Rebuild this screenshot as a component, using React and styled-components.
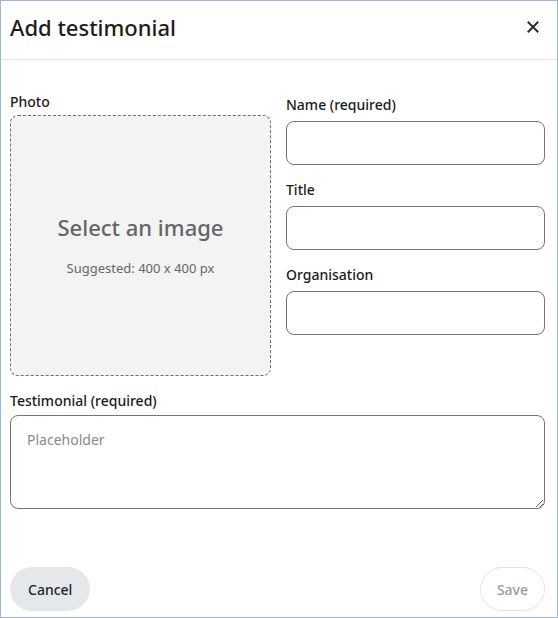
import React from 'react';
import styled, { createGlobalStyle } from 'styled-components';

const GlobalStyle = createGlobalStyle`
  html, body {
    margin: 0;
    padding: 0;
    background: #ffffff;
  }
  * {
    box-sizing: border-box;
  }
  body {
    font-family: "Noto Sans", "Open Sans", sans-serif;
    color: #1f1f1f;
  }
`

const App = () => {
  return (
    <>
      <GlobalStyle />
      <Dialog>
        <Header>
          <Title>Add testimonial</Title>
          <CloseButton aria-label="Close">
            <svg width="12" height="12" viewBox="0 0 12 12">
              <path d="M1.5 1.5 L10.5 10.5 M10.5 1.5 L1.5 10.5" stroke="#2b2b2b" strokeWidth="2" strokeLinecap="square" />
            </svg>
          </CloseButton>
        </Header>
        <Body>
          <Columns>
            <Field>
              <Label>Photo</Label>
              <PhotoDrop>
                <PhotoTitle>Select an image</PhotoTitle>
                <PhotoHint>Suggested: 400 x 400 px</PhotoHint>
              </PhotoDrop>
            </Field>
            <RightColumn>
              <Field>
                <Label $offset>Name (required)</Label>
                <Input />
              </Field>
              <Field>
                <Label $offset>Title</Label>
                <Input />
              </Field>
              <Field>
                <Label $offset>Organisation</Label>
                <Input />
              </Field>
            </RightColumn>
          </Columns>
          <Field>
            <Label>Testimonial (required)</Label>
            <TextArea placeholder="Placeholder" />
          </Field>
        </Body>
        <Footer>
          <CancelButton>Cancel</CancelButton>
          <SaveButton disabled>Save</SaveButton>
        </Footer>
      </Dialog>
    </>
  )
}

const Dialog = styled.div`
  width: 558px;
  height: 618px;
  border: 1px solid #9db9c7;
  background: #fff;
  display: flex;
  flex-direction: column;
`

const Header = styled.div`
  height: 59px;
  padding: 0 16px 6px 9px;
  border-bottom: 1px solid #e3e3e3;
  display: flex;
  align-items: center;
  justify-content: space-between;
`

const Title = styled.h1`
  margin: 0;
  font-size: 22px;
  font-weight: 500;
  color: #1c1c1c;
`

const CloseButton = styled.button`
  border: none;
  background: none;
  padding: 0;
  width: 16px;
  height: 16px;
  display: flex;
  align-items: center;
  justify-content: center;
  cursor: pointer;
`

const Body = styled.div`
  flex: 1;
  padding: 33px 12px 0 9px;
  display: flex;
  flex-direction: column;
  gap: 16px;
`

const Columns = styled.div`
  display: grid;
  grid-template-columns: 261px 1fr;
  column-gap: 15px;
`

const RightColumn = styled.div`
  display: flex;
  flex-direction: column;
  gap: 13px;
`

const Field = styled.div`
  display: flex;
  flex-direction: column;
`

const Label = styled.label`
  font-size: 14px;
  font-weight: 500;
  line-height: 18px;
  color: #1a1a1a;
  margin-top: ${p => (p.$offset ? '3px' : '0')};
  margin-bottom: ${p => (p.$offset ? '7px' : '4px')};
`

const PhotoDrop = styled.div`
  height: 261px;
  padding-bottom: 2px;
  background: #f3f3f3;
  border: 1px dashed #6e6e6e;
  border-radius: 8px;
  display: flex;
  flex-direction: column;
  align-items: center;
  justify-content: center;
  cursor: pointer;
`

const PhotoTitle = styled.div`
  font-size: 22px;
  font-weight: 500;
  color: #666;
  line-height: 30px;
`

const PhotoHint = styled.div`
  font-size: 13px;
  color: #666;
  margin-top: 17px;
`

const Input = styled.input`
  height: 44px;
  width: 100%;
  border: 1px solid #767676;
  border-radius: 8px;
  padding: 0 14px;
  font-family: inherit;
  font-size: 14px;
  outline: none;
`

const TextArea = styled.textarea`
  height: 94px;
  width: 100%;
  margin-top: 1px;
  border: 1px solid #767676;
  border-radius: 8px;
  padding: 14px 16px;
  font-family: inherit;
  font-size: 14px;
  resize: vertical;
  outline: none;

  &::placeholder {
    color: #8a8a8a;
  }
`

const Footer = styled.div`
  padding: 0 12px 6px 9px;
  display: flex;
  justify-content: space-between;
  align-items: center;
`

const CancelButton = styled.button`
  height: 44px;
  padding: 0 18px;
  border: none;
  border-radius: 22px;
  background: #e5e8eb;
  font-family: inherit;
  font-size: 14px;
  font-weight: 500;
  color: #1f1f1f;
  cursor: pointer;
`

const SaveButton = styled.button`
  height: 44px;
  padding: 0 16px;
  border: 1px solid #e3e3e3;
  border-radius: 22px;
  background: #fff;
  font-family: inherit;
  font-size: 14px;
  font-weight: 500;
  color: #9a9a9a;
`

export default App;
